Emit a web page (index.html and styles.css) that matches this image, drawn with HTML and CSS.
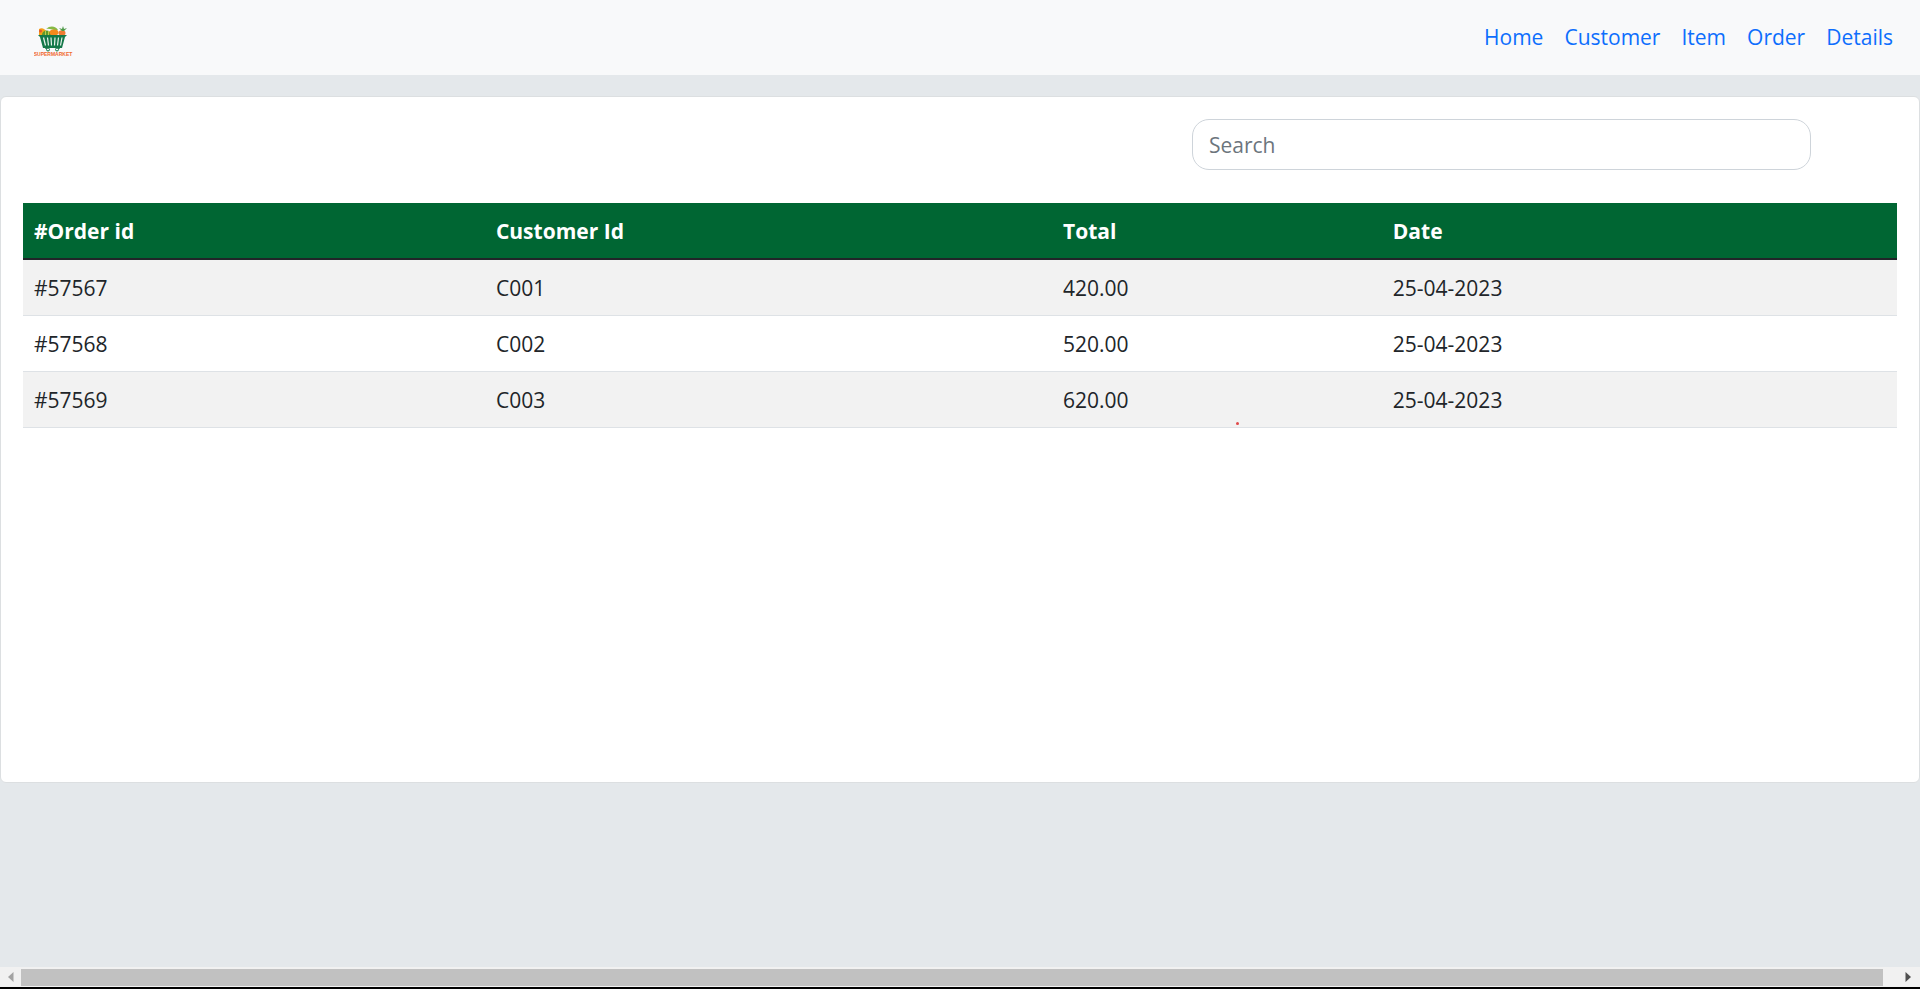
FILE: index.html
```html
<!DOCTYPE html>
<html lang="en">
<head>
<meta charset="utf-8">
<title>Supermarket - Order Details</title>
<link rel="stylesheet" href="styles.css">
</head>
<body>
<header class="navbar">
  <a class="brand" href="#home" aria-label="Supermarket">
    <svg class="logo" viewBox="0 0 40 32" aria-hidden="true">
      <path d="M5 9V3C8 1 11 3 12 5L17 9Z" fill="#f5a018"/>
      <path d="M12 3C16 -1 22 0 24 4C20 5 16 2 12 3Z" fill="#86b944"/>
      <path d="M8 9C8 3 17 3 18 9Z" fill="#5d9a2b"/>
      <path d="M11.500 5v4M14.500 5v4" stroke="#d7d858" stroke-width=".8"/>
      <ellipse cx="20" cy="6.500" rx="4.500" ry="3" fill="#f58a1c"/>
      <circle cx="6.500" cy="5" r="1.500" fill="#e4572e"/>
      <ellipse cx="28" cy="7" rx="3.500" ry="2.800" fill="#ee7b32"/>
      <path d="M28 5L25 2L28 3L29 0L30 3L33 2L30 5Z" fill="#4f9a48"/>
      <path d="M4 9H33L31 11L28 22H9L6 11Z" fill="#147849"/>
      <path d="M9.500 11.500L11.500 19.500M13.500 11.500L14.500 19.500M17 11.500L17.500 19.500M21 11.500L20.500 19.500M24.500 11.500L23.500 19.500M28 11.500L26.500 19.500" stroke="#eaf3ee" stroke-width="1.200"/>
      <path d="M11 22L15 23.500M26 22L22 23.500" stroke="#147849"/>
      <circle cx="14" cy="23.500" r="1.500" fill="#f8f9fa" stroke="#147849"/>
      <circle cx="23" cy="23.500" r="1.500" fill="#f8f9fa" stroke="#147849"/>
      <text class="logo-name" x="19" y="30" text-anchor="middle">SUPERMARKET</text>
    </svg>
  </a>
  <nav class="nav-links">
    <a href="#home">Home</a>
    <a href="#customer">Customer</a>
    <a href="#item">Item</a>
    <a href="#order">Order</a>
    <a href="#details">Details</a>
  </nav>
</header>
<main class="card">
  <form class="search-row" role="search">
    <input class="search" type="search" placeholder="Search" aria-label="Search">
  </form>
  <table class="orders">
    <colgroup><col class="col-order"><col class="col-customer"><col class="col-total"><col></colgroup>
    <thead>
      <tr><th scope="col">#Order id</th><th scope="col">Customer Id</th><th scope="col">Total</th><th scope="col">Date</th></tr>
    </thead>
    <tbody>
      <tr><td>#57567</td><td>C001</td><td>420.00</td><td>25-04-2023</td></tr>
      <tr><td>#57568</td><td>C002</td><td>520.00</td><td>25-04-2023</td></tr>
      <tr><td>#57569</td><td>C003</td><td>620.00</td><td>25-04-2023</td></tr>
    </tbody>
  </table>
  <span class="mark"></span>
</main>
<div class="scrollbar">
  <button class="scroll-button" type="button" aria-label="Scroll left"><svg viewBox="0 0 6 10"><path d="M5.500 0V10L0 5Z" fill="#a3a3a3"/></svg></button>
  <div class="scroll-thumb"></div>
  <button class="scroll-button" type="button" aria-label="Scroll right"><svg viewBox="0 0 6 10"><path d="M.5 0V10L6 5Z" fill="#505050"/></svg></button>
</div>
</body>
</html>
```

FILE: styles.css
```css
* { box-sizing: border-box; }

body {
  margin: 0;
  min-height: 100vh;
  display: flex;
  flex-direction: column;
  background: #e4e8eb;
  color: #212529;
  font: 21px/33px "Segoe UI", "Open Sans", "Noto Sans", sans-serif;
}

.navbar {
  display: flex;
  align-items: center;
  justify-content: space-between;
  padding: 11px 27px 11px 34px;
  min-height: 75px;
  background: #f8f9fa;
}

.brand { display: flex; padding-top: 8px; }
.logo { width: 40px; height: 32px; }
.logo-name {
  font: bold 5px "Liberation Sans", sans-serif;
  fill: #f0692f;
}

.nav-links { display: flex; gap: 21px; }
.nav-links a { color: #0d6efd; text-decoration: none; }

.card {
  position: relative;
  min-height: 687px;
  margin-top: 21px;
  padding: 22px;
  background: #fff;
  border: 1px solid #dcdfe1;
  border-radius: 6px;
}

.search-row {
  display: flex;
  justify-content: flex-end;
  margin: 0 0 33px;
  padding-right: 86px;
}

.search {
  width: 619px;
  max-width: 100%;
  height: 51px;
  padding: 8px 16px;
  border: 1px solid #ced4da;
  border-radius: 17px;
  background: #fff;
  color: #212529;
  font: inherit;
  appearance: none;
}
.search::placeholder { color: #6c757d; opacity: 1; }

.orders {
  width: 100%;
  table-layout: fixed;
  border-spacing: 0;
}
.col-order { width: 24.65%; }
.col-customer { width: 30.26%; }
.col-total { width: 17.6%; }

.orders th,
.orders td {
  padding: 12px 11px 10px;
  text-align: left;
}
.orders th {
  background: #063;
  color: #fff;
  font-weight: 700;
  border-bottom: 2px solid #212529;
}
.orders td { border-bottom: 1px solid #dee2e6; }
.orders tbody tr:nth-child(odd) { background: #f2f2f2; }

.mark {
  position: absolute;
  left: 64.4%;
  top: 325px;
  width: 3px;
  height: 3px;
  border-radius: 50%;
  background: #e04848;
}

.scrollbar {
  display: flex;
  align-items: center;
  height: 22px;
  padding-right: 2px;
  margin-top: auto;
  background: #f1f1f1;
  border-bottom: 2px solid #000;
}
.scroll-button {
  display: flex;
  flex: none;
  align-items: center;
  justify-content: center;
  width: 21px;
  height: 17px;
  padding: 0;
  border: 0;
  background: none;
}
.scroll-button svg { width: 6px; height: 10px; }
.scroll-thumb {
  flex: 1;
  height: 17px;
  margin-right: 14px;
  background: #c1c1c1;
}
```
